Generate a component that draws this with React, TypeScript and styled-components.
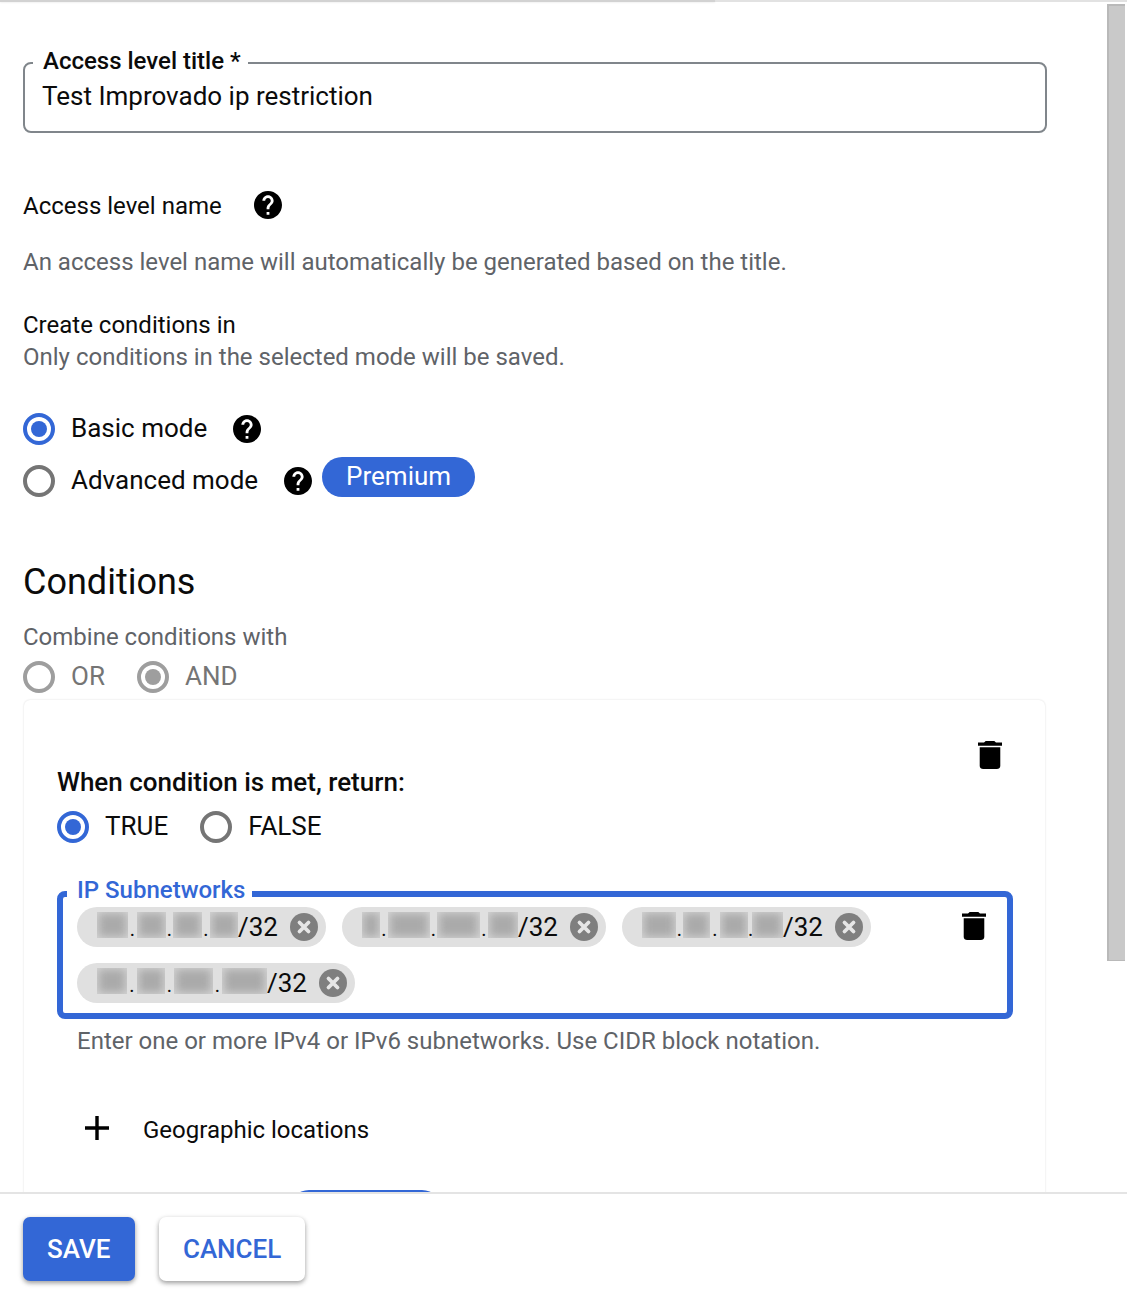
import { Fragment } from "react";
import { createGlobalStyle, styled } from "styled-components";

const BLUE = "#3367d6";
const INK = "#0b0b0b";
const MUTED = "#5f6368";

const GlobalStyle = createGlobalStyle`
	html, body {
		margin: 0;
		padding: 0;
		background: #fff;
	}
	body {
		font-family: Roboto, "Liberation Sans", sans-serif;
		font-size: 24px;
		line-height: 32px;
		color: ${INK};
		-webkit-font-smoothing: antialiased;
	}
`;

const Page = styled.div`
	width: 1127px;
	height: 1293px;
	display: flex;
	flex-direction: column;
	overflow: hidden;
`;

const TopBar = styled.div`
	flex: none;
	height: 2px;
	background: #e2e2e2;
`;

const TopBarShade = styled.div`
	width: 715px;
	height: 2px;
	background: #d2d2d2;
	box-shadow: 0 1px 2px rgba(0, 0, 0, 0.06);
`;

const Body = styled.div`
	flex: 1;
	min-height: 0;
	display: flex;
	overflow: hidden;
`;

const Content = styled.main`
	width: 1107px;
	flex: none;
	box-sizing: border-box;
	padding: 44px 60px 0 23px;
`;

const ScrollThumb = styled.div`
	flex: none;
	box-sizing: border-box;
	width: 18px;
	height: 957px;
	margin-top: 2px;
	background: #c9c9c9;
	border-left: 2px solid #b9b9b9;
	border-top: 2px solid #b9b9b9;
	border-bottom: 1px solid #b9b9b9;
`;

const Outline = styled.fieldset<{ $accent?: boolean }>`
	margin: 0;
	min-width: 0;
	box-sizing: border-box;
	border: ${({ $accent }) => ($accent ? `6px solid ${BLUE}` : "2px solid #80868b")};
	border-radius: 8px;
`;

const TitleField = styled(Outline)`
	height: 87px;
	padding: 0 18px 0 17px;
`;

const Legend = styled.legend<{ $accent?: boolean }>`
	margin-left: ${({ $accent }) => ($accent ? -10 : -9)}px;
	padding: 0 7px ${({ $accent }) => ($accent ? 8 : 4)}px 10px;
	font-weight: 500;
	line-height: 30px;
	color: ${({ $accent }) => ($accent ? BLUE : INK)};
`;

const FieldValue = styled.div`
	font-size: 26px;
	line-height: 32px;
`;

const LabelRow = styled.div`
	display: flex;
	align-items: center;
	gap: 32px;
	margin-top: 57px;
`;

const LabelHelp = styled.span`
	display: flex;
	margin-top: -2px;
`;

const Muted = styled.div<{ $top?: number }>`
	margin-top: ${({ $top }) => $top ?? 0}px;
	color: ${MUTED};
`;

const Plain = styled.div<{ $top?: number }>`
	margin-top: ${({ $top }) => $top ?? 0}px;
`;

const RadioLine = styled.div<{ $top?: number; $gap?: number }>`
	display: flex;
	align-items: center;
	height: 32px;
	margin-top: ${({ $top }) => $top ?? 0}px;
	gap: ${({ $gap }) => $gap ?? 0}px;
`;

const RadioItem = styled.label<{ $disabled?: boolean }>`
	display: flex;
	align-items: center;
	gap: 16px;
	font-size: 26px;
	color: ${({ $disabled }) => ($disabled ? "#757575" : INK)};
`;

const RadioText = styled.span`
	padding-bottom: 2px;
`;

const RadioRing = styled.span<{ $color: string }>`
	flex: none;
	width: 32px;
	height: 32px;
	box-sizing: border-box;
	border: 4px solid ${({ $color }) => $color};
	border-radius: 50%;
	display: flex;
	align-items: center;
	justify-content: center;
`;

const RadioDot = styled.span<{ $color: string }>`
	width: 16px;
	height: 16px;
	border-radius: 50%;
	background: ${({ $color }) => $color};
`;

const HelpSlot = styled.span<{ $left: number }>`
	display: flex;
	margin-left: ${({ $left }) => $left}px;
`;

const Badge = styled.span`
	display: flex;
	align-items: center;
	justify-content: center;
	box-sizing: border-box;
	height: 40px;
	width: 153px;
	margin: -8px 0 0 10px;
	border-radius: 20px;
	background: ${BLUE};
	color: #fff;
	font-size: 26px;
	padding-bottom: 2px;
`;

const Heading = styled.h2`
	margin: 63px 0 0;
	font-size: 36px;
	font-weight: 400;
	line-height: 44px;
`;

const Card = styled.section`
	margin: 7px 2px 0 1px;
	border-radius: 6px;
	box-shadow: 0 0 2px rgba(0, 0, 0, 0.16);
	padding: 41px 0 0 33px;
`;

const CardTools = styled.div`
	display: flex;
	justify-content: flex-end;
	padding-right: 43px;
	height: 25px;
`;

const ConditionTitle = styled.div`
	font-size: 26px;
	font-weight: 500;
`;

const SubnetField = styled(Outline)`
	width: 956px;
	height: 144px;
	margin-top: 32px;
	padding: 0 21px 0 14px;
	display: flex;
	align-items: flex-start;
	justify-content: space-between;
`;

const ChipList = styled.div`
	width: 840px;
	margin-top: -6px;
	display: flex;
	flex-wrap: wrap;
	gap: 16px;
`;

const Chip = styled.div`
	height: 40px;
	box-sizing: border-box;
	display: flex;
	align-items: center;
	padding: 0 8px 0 20px;
	border-radius: 20px;
	background: #e0e0e0;
	font-size: 26px;
`;

const Octet = styled.span<{ $w: number }>`
	width: ${({ $w }) => $w}px;
	height: 26px;
	margin-bottom: 5px;
	overflow: hidden;
	display: block;
	background: #d4d4d4;
	flex: none;
`;

const OctetBlur = styled.span`
	display: block;
	width: 100%;
	height: 100%;
	background: #aaaaaa;
	filter: blur(5px);
	transform: scale(0.9);
`;

const Dot = styled.span<{ $w: number }>`
	width: ${({ $w }) => $w}px;
	flex: none;
	text-align: center;
	font-size: 20px;
	line-height: 1;
	margin-top: 4px;
`;

const ChipClose = styled.span`
	display: flex;
	margin-left: 12px;
`;

const SubnetTrash = styled.span`
	display: flex;
	margin-top: -1px;
`;

const Hint = styled.div`
	margin: 6px 0 0 20px;
	color: ${MUTED};
`;

const AddRow = styled.div`
	display: flex;
	align-items: center;
	gap: 34px;
	margin: 57px 0 0 28px;
`;

const PlusIcon = styled.svg`
	margin-bottom: 4px;
`;

const PremiumPill = styled.div`
	width: 153px;
	height: 40px;
	margin: 44px 0 0 232px;
	border-radius: 20px;
	background: ${BLUE};
`;

const Footer = styled.footer`
	flex: none;
	box-sizing: border-box;
	height: 101px;
	display: flex;
	align-items: flex-start;
	gap: 24px;
	padding: 23px 0 0 23px;
	border-top: 2px solid #e4e4e4;
	background: #fff;
`;

const Button = styled.button<{ $primary?: boolean }>`
	height: 64px;
	padding: ${({ $primary }) => ($primary ? "0 25px 0 24px" : "0 23.5px")};
	border: none;
	border-radius: 7px;
	font-family: inherit;
	font-size: 26px;
	font-weight: 500;
	background: ${({ $primary }) => ($primary ? BLUE : "#fff")};
	color: ${({ $primary }) => ($primary ? "#fff" : BLUE)};
	box-shadow: 0 2px 4px rgba(0, 0, 0, 0.3), 0 2px 6px rgba(0, 0, 0, 0.12);
`;

function HelpIcon() {
	return (
		<svg width="28" height="28" viewBox="2 2 20 20" fill="#000">
			<path d="M12 2C6.48 2 2 6.48 2 12s4.48 10 10 10 10-4.48 10-10S17.52 2 12 2zm1 17h-2v-2h2v2zm2.07-7.75l-.9.92C13.45 12.9 13 13.5 13 15h-2v-.5c0-1.1.45-2.1 1.17-2.83l1.24-1.26c.37-.36.59-.86.59-1.41 0-1.1-.9-2-2-2s-2 .9-2 2H8c0-2.21 1.79-4 4-4s4 1.79 4 4c0 .88-.36 1.68-.93 2.25z" />
		</svg>
	);
}

function TrashIcon() {
	return (
		<svg width="24" height="28" viewBox="5 3 14 18" preserveAspectRatio="none" fill="#000">
			<path d="M6 19c0 1.1.9 2 2 2h8c1.1 0 2-.9 2-2V7H6v12zM19 4h-3.5l-1-1h-5l-1 1H5v2h14V4z" />
		</svg>
	);
}

function CloseIcon() {
	return (
		<svg width="28" height="28" viewBox="0 0 28 28">
			<circle cx="14" cy="14" r="14" fill="#7f7f7f" />
			<path d="M9.5 9.5l9 9M18.5 9.5l-9 9" stroke="#e6e6e6" strokeWidth="3.8" strokeLinecap="round" />
		</svg>
	);
}

function Radio({ color, checked }: { color: string; checked?: boolean }) {
	return <RadioRing $color={color}>{checked && <RadioDot $color={color} />}</RadioRing>;
}

type ChipData = { octets: number[]; dots: number[] };

const chips: ChipData[] = [
	{ octets: [31, 29, 29, 28], dots: [9, 7, 8] },
	{ octets: [18, 42, 43, 30], dots: [8, 7, 8] },
	{ octets: [34, 27, 28, 31], dots: [7, 10, 4] },
	{ octets: [30, 28, 39, 45], dots: [10, 9, 9] },
];

function SubnetChip({ octets, dots }: ChipData) {
	return (
		<Chip>
			{octets.map((w, i) => (
				<Fragment key={i}>
					<Octet $w={w}>
						<OctetBlur />
					</Octet>
					{i < dots.length && <Dot $w={dots[i]}>.</Dot>}
				</Fragment>
			))}
			<span>/32</span>
			<ChipClose>
				<CloseIcon />
			</ChipClose>
		</Chip>
	);
}

export default function App() {
	return (
		<Page>
			<GlobalStyle />
			<TopBar>
				<TopBarShade />
			</TopBar>
			<Body>
				<Content>
					<TitleField>
						<Legend>Access level title *</Legend>
						<FieldValue>Test Improvado ip restriction</FieldValue>
					</TitleField>

					<LabelRow>
						<span>Access level name</span>
						<LabelHelp>
							<HelpIcon />
						</LabelHelp>
					</LabelRow>
					<Muted $top={24}>An access level name will automatically be generated based on the title.</Muted>

					<Plain $top={31}>Create conditions in</Plain>
					<Muted>Only conditions in the selected mode will be saved.</Muted>

					<RadioLine $top={40}>
						<RadioItem>
							<Radio color={BLUE} checked />
							<RadioText>Basic mode</RadioText>
						</RadioItem>
						<HelpSlot $left={26}>
							<HelpIcon />
						</HelpSlot>
					</RadioLine>
					<RadioLine $top={20}>
						<RadioItem>
							<Radio color="#757575" />
							<RadioText>Advanced mode</RadioText>
						</RadioItem>
						<HelpSlot $left={26}>
							<HelpIcon />
						</HelpSlot>
						<Badge>Premium</Badge>
					</RadioLine>

					<Heading>Conditions</Heading>
					<Muted $top={17}>Combine conditions with</Muted>
					<RadioLine $top={8} $gap={32}>
						<RadioItem $disabled>
							<Radio color="#9e9e9e" />
							<RadioText>OR</RadioText>
						</RadioItem>
						<RadioItem $disabled>
							<Radio color="#9e9e9e" checked />
							<RadioText>AND</RadioText>
						</RadioItem>
					</RadioLine>

					<Card>
						<CardTools>
							<TrashIcon />
						</CardTools>
						<ConditionTitle>When condition is met, return:</ConditionTitle>
						<RadioLine $top={13} $gap={32}>
							<RadioItem>
								<Radio color={BLUE} checked />
								<RadioText>TRUE</RadioText>
							</RadioItem>
							<RadioItem>
								<Radio color="#757575" />
								<RadioText>FALSE</RadioText>
							</RadioItem>
						</RadioLine>

						<SubnetField $accent>
							<Legend $accent>IP Subnetworks</Legend>
							<ChipList>
								{chips.map((chip, i) => (
									<SubnetChip key={i} {...chip} />
								))}
							</ChipList>
							<SubnetTrash>
								<TrashIcon />
							</SubnetTrash>
						</SubnetField>
						<Hint>Enter one or more IPv4 or IPv6 subnetworks. Use CIDR block notation.</Hint>

						<AddRow>
							<PlusIcon width="24" height="24" viewBox="5 5 14 14" fill="#000">
								<path d="M19 13h-6v6h-2v-6H5v-2h6V5h2v6h6v2z" />
							</PlusIcon>
							<span>Geographic locations</span>
						</AddRow>
						<PremiumPill />
					</Card>
				</Content>
				<ScrollThumb />
			</Body>
			<Footer>
				<Button $primary>SAVE</Button>
				<Button>CANCEL</Button>
			</Footer>
		</Page>
	);
}
